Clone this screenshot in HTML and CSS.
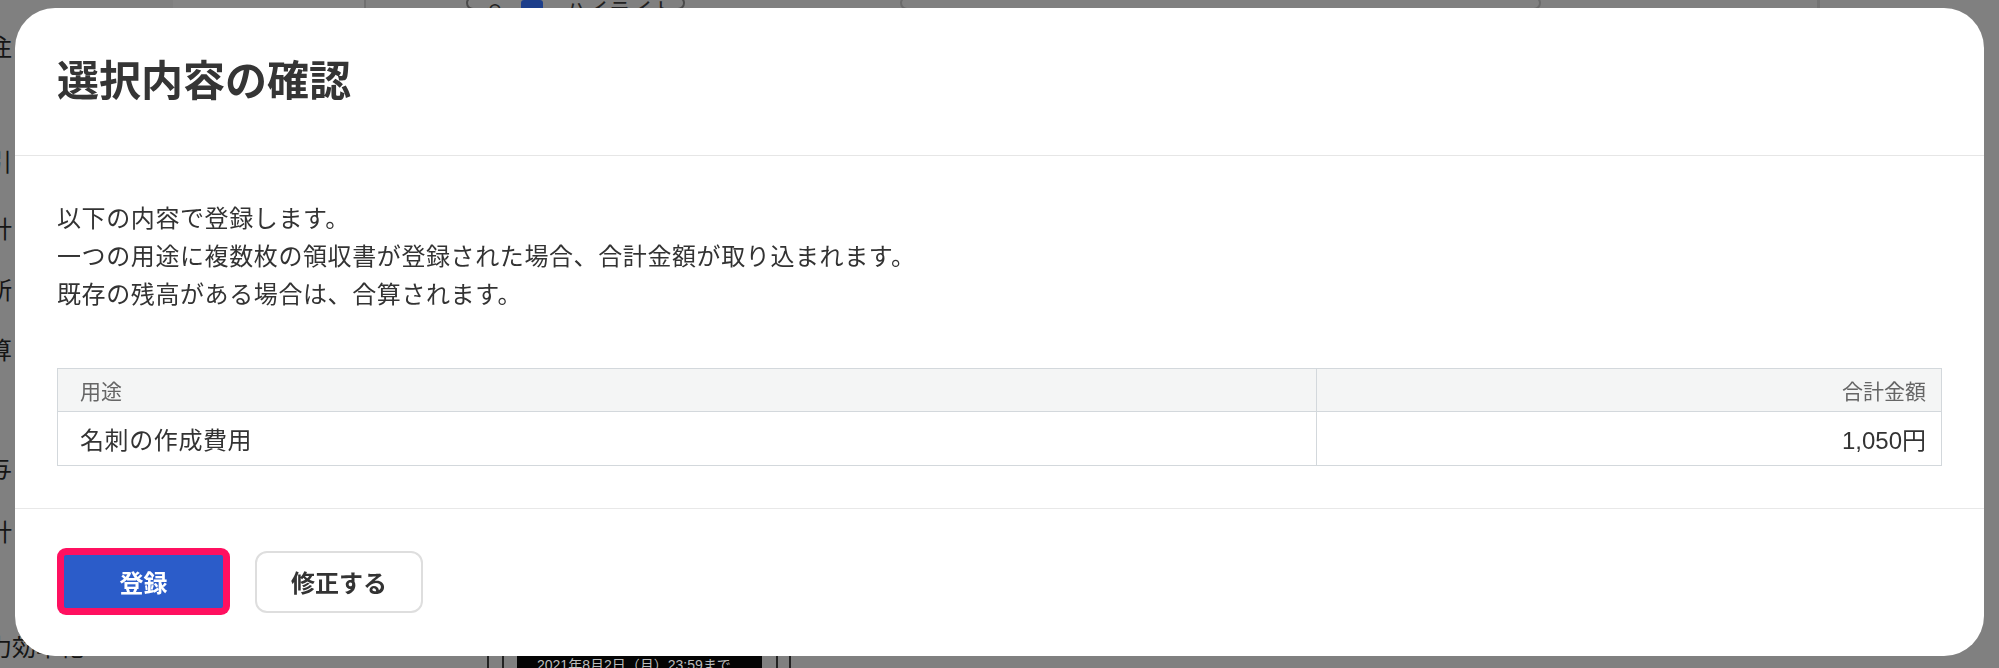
FILE: index.html
```html
<!DOCTYPE html>
<html lang="ja">
<head>
<meta charset="utf-8">
<title>選択内容の確認</title>
<link rel="stylesheet" href="styles.css">
</head>
<body>
<div class="page">
  <aside class="side">
    <div class="side-item h115">注</div>
    <div class="side-item h67">引</div>
    <div class="side-item h61">計</div>
    <div class="side-item h60">所</div>
    <div class="side-item h118">算</div>
    <div class="side-item h64">与</div>
    <div class="side-item h115">計</div>
    <div class="side-item h60">力効率化</div>
  </aside>
  <main class="content">
    <div class="topbar">
      <div class="tb-block"></div>
      <div class="tb-pill"><span class="tb-icon">↶</span><span class="tb-check"></span><span class="tb-text">ハイライト</span></div>
      <div class="tb-pill2"></div>
      <div class="tb-line"></div>
    </div>
    <div class="spacer"></div>
    <div class="bottombar">
      <div class="bb-lines"></div>
      <div class="bb-box">2021年8月2日（月）23:59まで</div>
      <div class="bb-lines bb-lines2"></div>
    </div>
  </main>
</div>

<div class="modal" role="dialog" aria-labelledby="mtitle">
  <header class="modal-header">
    <h1 id="mtitle" class="modal-title">選択内容の確認</h1>
  </header>
  <section class="modal-body">
    <p class="lead">以下の内容で登録します。<br>一つの用途に複数枚の領収書が登録された場合、合計金額が取り込まれます。<br>既存の残高がある場合は、合算されます。</p>
    <table class="summary">
      <thead>
        <tr><th class="col-use">用途</th><th class="col-amt">合計金額</th></tr>
      </thead>
      <tbody>
        <tr><td class="col-use">名刺の作成費用</td><td class="col-amt">1,050円</td></tr>
      </tbody>
    </table>
  </section>
  <footer class="modal-footer">
    <span class="highlight"><button class="btn btn-primary">登録</button></span>
    <button class="btn btn-secondary">修正する</button>
  </footer>
</div>
</body>
</html>
```

FILE: styles.css
```css
* { box-sizing: border-box; }
html, body {
  margin: 0;
  padding: 0;
  width: 1999px;
  height: 668px;
  overflow: hidden;
  font-family: "Liberation Sans", "Noto Sans CJK JP", sans-serif;
  background: #808080;
}

/* dimmed page behind */
.page {
  display: flex;
  width: 1999px;
  height: 668px;
  background: #808080;
}
.side {
  width: 13px;
  flex: none;
  display: flex;
  flex-direction: column;
  padding-top: 33px;
  color: #151515;
  font-size: 24px;
  line-height: 30px;
  position: relative;
  z-index: 0;
}
.side-item {
  margin-left: -12px;
  white-space: nowrap;
  flex: none;
}
.h115 { height: 115px; }
.h67 { height: 67px; }
.h61 { height: 61px; }
.h60 { height: 60px; }
.h118 { height: 118px; }
.h64 { height: 64px; }
.content {
  flex: 1;
  display: flex;
  flex-direction: column;
}
.topbar {
  height: 10px;
  display: flex;
  align-items: flex-start;
}
.tb-block {
  margin-left: 160px;
  width: 193px;
  height: 10px;
  background: #858585;
  border-right: 2px solid #707070;
}
.tb-pill {
  margin-left: 100px;
  width: 219px;
  height: 14px;
  margin-top: -4px;
  border: 2px solid #4a4a4a;
  border-radius: 8px;
  display: flex;
  align-items: flex-start;
  padding-left: 18px;
  overflow: hidden;
}
.tb-icon {
  font-size: 18px;
  line-height: 20px;
  margin-top: 2px;
  color: #222;
  width: 35px;
}
.tb-check {
  width: 22px;
  height: 14px;
  margin-top: 2px;
  border-radius: 3px;
  background: #1d3e8a;
  margin-right: 22px;
}
.tb-text {
  font-size: 22px;
  line-height: 20px;
  margin-top: 3px;
  color: #222;
  white-space: nowrap;
}
.tb-pill2 {
  margin-left: 215px;
  width: 641px;
  height: 14px;
  margin-top: -4px;
  border: 2px solid #6a6a6a;
  border-radius: 10px;
}
.tb-line {
  margin-left: 276px;
  width: 3px;
  height: 10px;
  background: #747474;
}
.spacer { flex: 1; }
.bottombar {
  height: 12px;
  display: flex;
  margin-left: 474px;
}
.bb-lines {
  width: 17px;
  border-left: 2px solid #222;
  border-right: 2px solid #222;
}
.bb-lines2 {
  margin-left: 14px;
  width: 15px;
}
.bb-box {
  margin-left: 13px;
  width: 245px;
  background: #050505;
  color: #bdbdbd;
  font-size: 14px;
  line-height: 16px;
  padding: 1px 0 0 20px;
  white-space: nowrap;
  overflow: hidden;
}

/* modal overlay */
.modal {
  position: fixed;
  left: 15px;
  top: 8px;
  width: 1969px;
  height: 648px;
  background: #ffffff;
  border-radius: 40px;
  display: flex;
  flex-direction: column;
  color: #333333;
  overflow: hidden;
  z-index: 1;
}
.modal-header {
  height: 148px;
  flex: none;
  display: flex;
  align-items: center;
  padding: 0 42px;
  border-bottom: 1px solid #e6e6e6;
}
.modal-title {
  margin: 0;
  font-size: 42px;
  line-height: 50px;
  font-weight: 700;
  color: #353535;
}
.modal-body {
  flex: none;
  padding: 44px 42px 42px;
  border-bottom: 1px solid #e8e8e8;
}
.lead {
  margin: 0 0 54px;
  font-size: 24px;
  line-height: 38px;
  letter-spacing: 0.6px;
  color: #333;
}
.summary {
  width: 100%;
  border-collapse: collapse;
  border: 1px solid #d3d8dc;
}
.summary th,
.summary td {
  border: 1px solid #d3d8dc;
  padding: 0 22px;
}
.summary th {
  height: 43px;
  background: #f4f5f5;
  font-size: 21px;
  font-weight: 400;
  color: #666;
  text-align: left;
}
.summary td {
  height: 54px;
  font-size: 24px;
  letter-spacing: 0.6px;
  color: #333;
}
.summary .col-use { width: 1259px; }
.summary .col-amt {
  text-align: right;
  padding-right: 15px;
}
.summary td.col-amt { letter-spacing: 0; }
.modal-footer {
  flex: 1;
  display: flex;
  align-items: center;
  gap: 25px;
  padding: 0 42px 2px;
}
.highlight {
  display: inline-flex;
  padding: 7px;
  background: #ff1060;
  border-radius: 9px;
}
.btn {
  font-family: "Liberation Sans", "Noto Sans CJK JP", sans-serif;
  font-size: 24px;
  font-weight: 700;
  cursor: pointer;
}
.btn-primary {
  width: 159px;
  height: 53px;
  border: none;
  border-radius: 2px;
  background: #2b5cc9;
  color: #ffffff;
}
.btn-secondary {
  width: 168px;
  height: 62px;
  border: 2px solid #dedede;
  border-radius: 12px;
  background: #ffffff;
  color: #333333;
}
```
